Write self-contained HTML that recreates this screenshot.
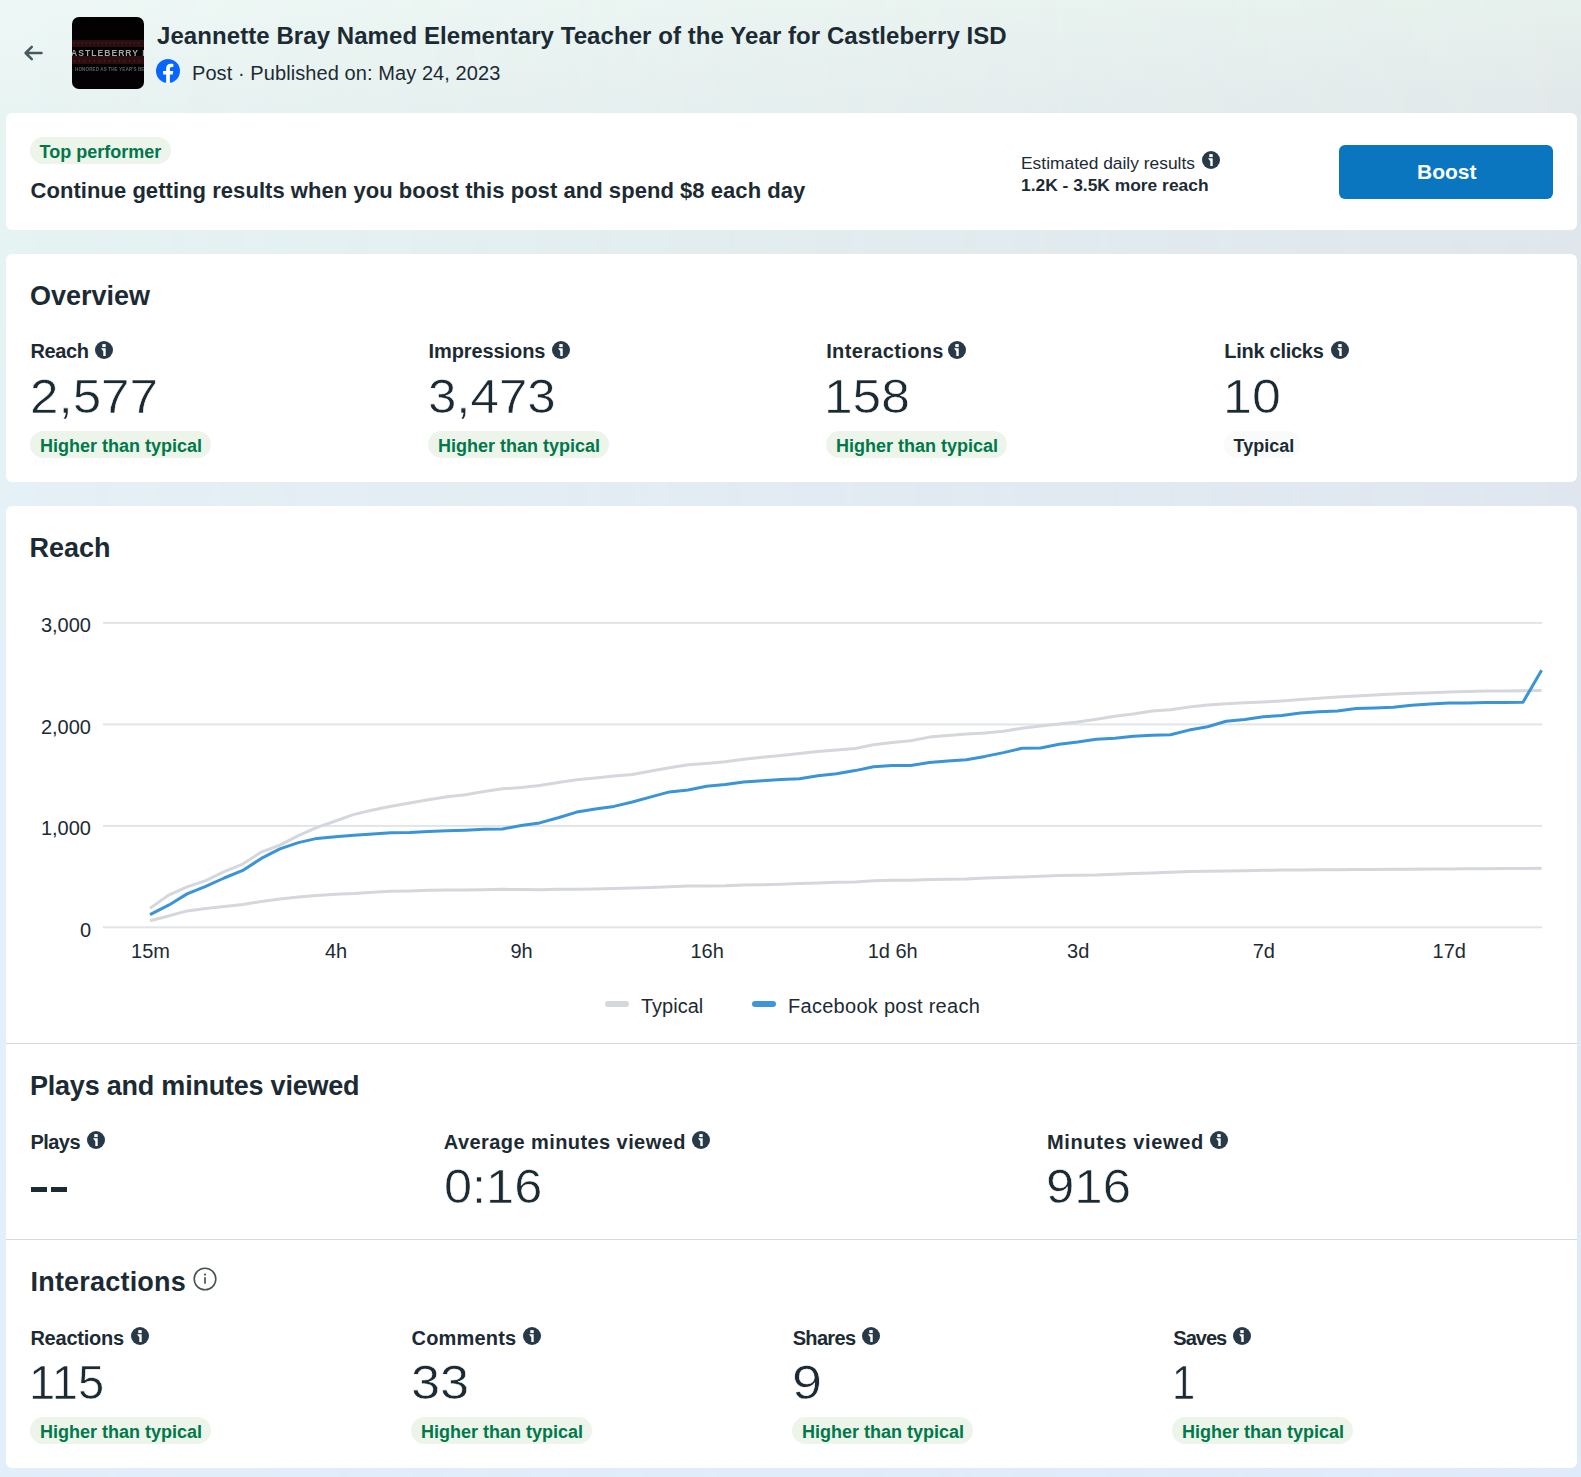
<!DOCTYPE html>
<html><head><meta charset="utf-8"><title>Post insights</title>
<style>
html,body{margin:0;padding:0}
body{width:1581px;height:1477px;position:relative;overflow:hidden;font-family:"Liberation Sans",sans-serif;
background:linear-gradient(180deg,#eef8f6 0px,#e8f4f2 120px,#e6f3f3 240px,#e5f1f6 495px,#e3f0fa 900px,#e2eefa 1477px);}
#bgr{position:absolute;left:0;top:0;width:1581px;height:1477px;
background:linear-gradient(180deg,#e6f0ec 0px,#e2e9ea 100px,#dfe6ec 240px,#dfe6ef 495px,#dfe9f8 900px,#dfeafa 1477px);
-webkit-mask-image:linear-gradient(90deg,transparent 0%,#000 100%);mask-image:linear-gradient(90deg,transparent 0%,#000 100%);}
.a{position:absolute}
.t{position:absolute;white-space:nowrap}
.card{position:absolute;background:#fff;border-radius:6px}
</style></head><body>
<div id="bgr"></div>
<svg class="a" style="left:22px;top:43px" width="22" height="20" viewBox="0 0 22 20"><path d="M19.5 10H3.8M9.8 3.8L3.6 10L9.8 16.2" stroke="#4a575f" stroke-width="2.5" fill="none" stroke-linecap="round" stroke-linejoin="round"/></svg>
<div class="a" style="left:72px;top:17px;width:72px;height:72px;border-radius:7px;background:#030101;overflow:hidden"><div class="a" style="left:0;top:22.5px;width:72px;height:7.5px;background:#2c0e11"></div><div class="a" style="left:0;top:39px;width:72px;height:8px;background:#2c0e11"></div><div class="a" style="left:2px;top:25px;width:68px;height:1.5px;background:repeating-linear-gradient(90deg,#6a4548 0 1px,transparent 1px 4px);opacity:.35"></div><div class="a" style="left:2px;top:43px;width:68px;height:1.5px;background:repeating-linear-gradient(90deg,#6a4548 0 1px,transparent 1px 5px);opacity:.35"></div><div class="t" style="left:-1px;top:31px;font-size:9.5px;line-height:9px;font-weight:700;color:#a3a7a8;letter-spacing:1.15px;transform:scaleX(0.9);transform-origin:0 0;filter:blur(0.45px)">ASTLEBERRY IS</div><div class="t" style="left:3px;top:48.5px;font-size:5px;line-height:6px;font-weight:700;color:#56646a;letter-spacing:0.1px;transform:scaleX(0.92);transform-origin:0 0;filter:blur(0.4px)">HONORED AS THE YEAR'S BEST</div></div>
<div class="t" style="left:157px;top:21.80px;font-size:24px;line-height:27px;font-weight:700;color:#1c2b33;letter-spacing:0.07px">Jeannette Bray Named Elementary Teacher of the Year for Castleberry ISD</div>
<svg class="a" style="left:156px;top:59px" width="24" height="24" viewBox="0 0 1024 1024"><circle cx="512" cy="512" r="512" fill="#0866ff"/><path d="M432 1020V660H302V512H432V399.2C432 270.88 508.44 200 625.39 200C681.41 200 740 210 740 210V336H675.44C611.84 336 592 375.47 592 415.96V512H734L711.3 660H592V1020Z" fill="#fff"/></svg>
<div class="t" style="left:192px;top:61.80px;font-size:20px;line-height:22px;font-weight:400;color:#1c2b33;letter-spacing:0.08px">Post · Published on: May 24, 2023</div>
<div class="card" style="left:6px;top:113px;width:1571px;height:117px"></div>
<div class="a" style="left:30px;top:137px;width:141px;height:27px;border-radius:13.5px;background:#edf4ea"></div>
<div class="t" style="left:39.5px;top:142.10px;font-size:18px;line-height:20px;font-weight:700;color:#00784b;">Top performer</div>
<div class="t" style="left:30.5px;top:178.40px;font-size:22px;line-height:25px;font-weight:700;color:#1c2b33;letter-spacing:0.05px">Continue getting results when you boost this post and spend $8 each day</div>
<div class="t" style="left:1021px;top:152.70px;font-size:17.4px;line-height:20px;font-weight:400;color:#1c2b33;">Estimated daily results</div>
<svg class="a" style="left:1202px;top:151px" width="18" height="18" viewBox="0 0 18 18"><circle cx="9" cy="9" r="9" fill="#283a48"/><rect x="7.3" y="3.1" width="3.4" height="3" fill="#fff"/><path d="M6 7.3H10.7V15H8.3V10.2Z" fill="#fff"/></svg>
<div class="t" style="left:1021px;top:174.50px;font-size:17.4px;line-height:20px;font-weight:700;color:#1c2b33;">1.2K - 3.5K more reach</div>
<div class="a" style="left:1339px;top:145px;width:214px;height:54px;border-radius:6px;background:#0a76bf"></div>
<div class="t" style="left:1417px;top:160.00px;font-size:21px;line-height:23px;font-weight:700;color:#fff;">Boost</div>
<div class="card" style="left:6px;top:254px;width:1571px;height:228px"></div>
<div class="t" style="left:30px;top:280.80px;font-size:27px;line-height:30px;font-weight:700;color:#1c2b33;">Overview</div>
<div class="t" style="left:30.4px;top:340.40px;font-size:20px;line-height:22px;font-weight:700;color:#1c2b33;letter-spacing:-0.353px">Reach</div>
<svg class="a" style="left:95px;top:341px" width="18" height="18" viewBox="0 0 18 18"><circle cx="9" cy="9" r="9" fill="#283a48"/><rect x="7.3" y="3.1" width="3.4" height="3" fill="#fff"/><path d="M6 7.3H10.7V15H8.3V10.2Z" fill="#fff"/></svg>
<div class="t" style="left:30.412px;top:369.00px;font-size:49px;line-height:54px;font-weight:400;color:#1c2b33;transform:scaleX(1.044);transform-origin:0 0;-webkit-text-stroke:0.6px #fff">2,577</div>
<div class="a" style="left:30px;top:431px;width:181px;height:27px;border-radius:13.5px;background:#edf4ea"></div>
<div class="t" style="left:40px;top:435.60px;font-size:18px;line-height:20px;font-weight:700;color:#00784b;">Higher than typical</div>
<div class="t" style="left:428.5px;top:340.40px;font-size:20px;line-height:22px;font-weight:700;color:#1c2b33;letter-spacing:-0.090px">Impressions</div>
<svg class="a" style="left:552.3px;top:341px" width="18" height="18" viewBox="0 0 18 18"><circle cx="9" cy="9" r="9" fill="#283a48"/><rect x="7.3" y="3.1" width="3.4" height="3" fill="#fff"/><path d="M6 7.3H10.7V15H8.3V10.2Z" fill="#fff"/></svg>
<div class="t" style="left:428.459px;top:369.00px;font-size:49px;line-height:54px;font-weight:400;color:#1c2b33;transform:scaleX(1.041);transform-origin:0 0;-webkit-text-stroke:0.6px #fff">3,473</div>
<div class="a" style="left:428px;top:431px;width:181px;height:27px;border-radius:13.5px;background:#edf4ea"></div>
<div class="t" style="left:438px;top:435.60px;font-size:18px;line-height:20px;font-weight:700;color:#00784b;">Higher than typical</div>
<div class="t" style="left:826.2px;top:340.40px;font-size:20px;line-height:22px;font-weight:700;color:#1c2b33;letter-spacing:0.351px">Interactions</div>
<svg class="a" style="left:948px;top:341px" width="18" height="18" viewBox="0 0 18 18"><circle cx="9" cy="9" r="9" fill="#283a48"/><rect x="7.3" y="3.1" width="3.4" height="3" fill="#fff"/><path d="M6 7.3H10.7V15H8.3V10.2Z" fill="#fff"/></svg>
<div class="t" style="left:823.85px;top:369.00px;font-size:49px;line-height:54px;font-weight:400;color:#1c2b33;transform:scaleX(1.05);transform-origin:0 0;-webkit-text-stroke:0.6px #fff">158</div>
<div class="a" style="left:826px;top:431px;width:181px;height:27px;border-radius:13.5px;background:#edf4ea"></div>
<div class="t" style="left:836px;top:435.60px;font-size:18px;line-height:20px;font-weight:700;color:#00784b;">Higher than typical</div>
<div class="t" style="left:1224.2px;top:340.40px;font-size:20px;line-height:22px;font-weight:700;color:#1c2b33;letter-spacing:-0.265px">Link clicks</div>
<svg class="a" style="left:1330.5px;top:341px" width="18" height="18" viewBox="0 0 18 18"><circle cx="9" cy="9" r="9" fill="#283a48"/><rect x="7.3" y="3.1" width="3.4" height="3" fill="#fff"/><path d="M6 7.3H10.7V15H8.3V10.2Z" fill="#fff"/></svg>
<div class="t" style="left:1222.52px;top:369.00px;font-size:49px;line-height:54px;font-weight:400;color:#1c2b33;transform:scaleX(1.06);transform-origin:0 0;-webkit-text-stroke:0.6px #fff">10</div>
<div class="a" style="left:1224px;top:431px;width:77px;height:27px;border-radius:13.5px;background:#f9fbfb"></div>
<div class="t" style="left:1233.5px;top:435.60px;font-size:18px;line-height:20px;font-weight:700;color:#1c2b33;">Typical</div>
<div class="card" style="left:6px;top:506px;width:1571px;height:962px"></div>
<div class="t" style="left:29.5px;top:533.00px;font-size:27px;line-height:30px;font-weight:700;color:#1c2b33;">Reach</div>
<svg class="a" style="left:0;top:0" width="1581" height="1100" viewBox="0 0 1581 1100"><rect x="103" y="621.9" width="1439" height="2" fill="#e2e4e7"/><rect x="103" y="723.4" width="1439" height="2" fill="#e2e4e7"/><rect x="103" y="824.9" width="1439" height="2" fill="#e2e4e7"/><rect x="103" y="926.3" width="1439" height="2" fill="#e2e4e7"/><path d="M150.0 920.7 L168.6 916.0 L187.1 910.9 L205.7 908.4 L224.2 906.5 L242.8 904.6 L261.3 901.4 L279.9 898.9 L298.4 897.0 L317.0 895.4 L335.5 894.3 L354.1 893.5 L372.7 892.2 L391.2 891.3 L409.8 890.9 L428.3 890.3 L446.9 890.0 L465.4 890.0 L484.0 889.7 L502.5 889.3 L521.1 889.6 L539.6 889.7 L558.2 889.3 L576.8 889.3 L595.3 888.9 L613.9 888.6 L632.4 888.0 L651.0 887.4 L669.5 886.7 L688.1 886.1 L706.6 885.9 L725.2 885.7 L743.7 885.0 L762.3 884.7 L780.9 884.2 L799.4 883.4 L818.0 882.9 L836.5 882.3 L855.1 881.9 L873.6 880.7 L892.2 880.2 L910.7 880.3 L929.3 879.6 L947.9 879.3 L966.4 878.9 L985.0 878.0 L1003.5 877.5 L1022.1 876.9 L1040.6 876.2 L1059.2 875.5 L1077.7 875.2 L1096.3 875.0 L1114.8 874.3 L1133.4 873.6 L1152.0 873.0 L1170.5 872.3 L1189.1 871.6 L1207.6 871.3 L1226.2 870.9 L1244.7 870.7 L1263.3 870.2 L1281.8 870.1 L1300.4 869.9 L1318.9 869.8 L1337.5 869.7 L1356.1 869.6 L1374.6 869.4 L1393.2 869.3 L1411.7 869.2 L1430.3 869.1 L1448.8 868.9 L1467.4 868.8 L1485.9 868.7 L1504.5 868.6 L1523.0 868.4 L1541.6 868.3" fill="none" stroke="#d4d7db" stroke-width="3" stroke-linejoin="round" stroke-linecap="butt"/><path d="M150.0 908.4 L168.6 895.1 L187.1 886.9 L205.7 880.6 L224.2 871.7 L242.8 864.1 L261.3 852.1 L279.9 845.1 L298.4 835.7 L317.0 827.4 L335.5 821.0 L354.1 814.4 L372.7 810.0 L391.2 806.2 L409.8 803.0 L428.3 799.8 L446.9 796.7 L465.4 794.8 L484.0 791.6 L502.5 788.8 L521.1 787.5 L539.6 785.5 L558.2 782.4 L576.8 779.8 L595.3 778.0 L613.9 776.1 L632.4 774.4 L651.0 771.0 L669.5 767.8 L688.1 764.7 L706.6 763.4 L725.2 761.7 L743.7 759.2 L762.3 757.3 L780.9 755.4 L799.4 753.5 L818.0 751.6 L836.5 750.0 L855.1 748.5 L873.6 744.7 L892.2 742.5 L910.7 740.8 L929.3 737.1 L947.9 735.4 L966.4 734.0 L985.0 733.1 L1003.5 731.3 L1022.1 728.2 L1040.6 725.9 L1059.2 723.9 L1077.7 722.0 L1096.3 719.3 L1114.8 716.3 L1133.4 713.9 L1152.0 711.1 L1170.5 709.8 L1189.1 707.1 L1207.6 705.1 L1226.2 703.7 L1244.7 702.7 L1263.3 702.0 L1281.8 700.9 L1300.4 699.5 L1318.9 698.2 L1337.5 697.1 L1356.1 696.0 L1374.6 695.0 L1393.2 694.1 L1411.7 693.3 L1430.3 692.7 L1448.8 692.0 L1467.4 691.4 L1485.9 691.1 L1504.5 690.9 L1523.0 690.8 L1541.6 690.6" fill="none" stroke="#d4d7db" stroke-width="3" stroke-linejoin="round" stroke-linecap="butt"/><path d="M150.0 914.7 L168.6 905.2 L187.1 893.9 L205.7 886.3 L224.2 878.0 L242.8 870.4 L261.3 858.4 L279.9 848.9 L298.4 842.6 L317.0 838.4 L335.5 836.8 L354.1 835.3 L372.7 834.0 L391.2 832.7 L409.8 832.4 L428.3 831.5 L446.9 830.8 L465.4 830.2 L484.0 829.3 L502.5 828.9 L521.1 825.6 L539.6 822.9 L558.2 817.8 L576.8 812.1 L595.3 809.0 L613.9 806.4 L632.4 802.0 L651.0 796.9 L669.5 791.9 L688.1 790.0 L706.6 786.2 L725.2 784.5 L743.7 782.0 L762.3 780.7 L780.9 779.5 L799.4 778.8 L818.0 775.7 L836.5 773.8 L855.1 770.6 L873.6 766.8 L892.2 765.5 L910.7 765.6 L929.3 762.4 L947.9 761.1 L966.4 759.7 L985.0 756.4 L1003.5 752.6 L1022.1 748.2 L1040.6 748.0 L1059.2 744.2 L1077.7 742.0 L1096.3 739.3 L1114.8 738.2 L1133.4 736.2 L1152.0 735.2 L1170.5 734.8 L1189.1 730.1 L1207.6 726.7 L1226.2 721.3 L1244.7 719.5 L1263.3 716.8 L1281.8 715.4 L1300.4 713.1 L1318.9 711.7 L1337.5 710.9 L1356.1 708.6 L1374.6 707.9 L1393.2 707.2 L1411.7 705.2 L1430.3 703.9 L1448.8 703.0 L1467.4 702.9 L1485.9 702.6 L1504.5 702.4 L1523.0 702.2 L1541.6 670.2" fill="none" stroke="#3b94d6" stroke-width="3" stroke-linejoin="round" stroke-linecap="butt"/></svg>
<div class="t" style="left:0;width:91px;text-align:right;top:613.9px;font-size:20px;line-height:22px;color:#1c2b33">3,000</div>
<div class="t" style="left:0;width:91px;text-align:right;top:715.5px;font-size:20px;line-height:22px;color:#1c2b33">2,000</div>
<div class="t" style="left:0;width:91px;text-align:right;top:817.0px;font-size:20px;line-height:22px;color:#1c2b33">1,000</div>
<div class="t" style="left:0;width:91px;text-align:right;top:918.9px;font-size:20px;line-height:22px;color:#1c2b33">0</div>
<div class="t" style="left:90.5px;width:120px;text-align:center;top:940.2px;font-size:20px;line-height:22px;color:#1c2b33">15m</div>
<div class="t" style="left:276.0px;width:120px;text-align:center;top:940.2px;font-size:20px;line-height:22px;color:#1c2b33">4h</div>
<div class="t" style="left:461.6px;width:120px;text-align:center;top:940.2px;font-size:20px;line-height:22px;color:#1c2b33">9h</div>
<div class="t" style="left:647.1px;width:120px;text-align:center;top:940.2px;font-size:20px;line-height:22px;color:#1c2b33">16h</div>
<div class="t" style="left:832.7px;width:120px;text-align:center;top:940.2px;font-size:20px;line-height:22px;color:#1c2b33">1d 6h</div>
<div class="t" style="left:1018.2px;width:120px;text-align:center;top:940.2px;font-size:20px;line-height:22px;color:#1c2b33">3d</div>
<div class="t" style="left:1203.8px;width:120px;text-align:center;top:940.2px;font-size:20px;line-height:22px;color:#1c2b33">7d</div>
<div class="t" style="left:1389.3px;width:120px;text-align:center;top:940.2px;font-size:20px;line-height:22px;color:#1c2b33">17d</div>
<div class="a" style="left:605px;top:1001px;width:24px;height:6px;border-radius:3px;background:#d4d7db"></div>
<div class="t" style="left:641px;top:994.80px;font-size:20px;line-height:22px;font-weight:400;color:#1c2b33;">Typical</div>
<div class="a" style="left:752px;top:1001px;width:24px;height:6px;border-radius:3px;background:#3f95d8"></div>
<div class="t" style="left:788px;top:994.80px;font-size:20px;line-height:22px;font-weight:400;color:#1c2b33;letter-spacing:0.28px">Facebook post reach</div>
<div class="a" style="left:6px;top:1043px;width:1571px;height:1px;background:#d3dae0"></div>
<div class="t" style="left:30px;top:1071.30px;font-size:27px;line-height:30px;font-weight:700;color:#1c2b33;letter-spacing:-0.22px">Plays and minutes viewed</div>
<div class="t" style="left:30.4px;top:1130.80px;font-size:20px;line-height:22px;font-weight:700;color:#1c2b33;letter-spacing:-0.535px">Plays</div>
<svg class="a" style="left:87.2px;top:1131px" width="18" height="18" viewBox="0 0 18 18"><circle cx="9" cy="9" r="9" fill="#283a48"/><rect x="7.3" y="3.1" width="3.4" height="3" fill="#fff"/><path d="M6 7.3H10.7V15H8.3V10.2Z" fill="#fff"/></svg>
<div class="t" style="left:443.8px;top:1130.80px;font-size:20px;line-height:22px;font-weight:700;color:#1c2b33;letter-spacing:0.425px">Average minutes viewed</div>
<svg class="a" style="left:691.8px;top:1131px" width="18" height="18" viewBox="0 0 18 18"><circle cx="9" cy="9" r="9" fill="#283a48"/><rect x="7.3" y="3.1" width="3.4" height="3" fill="#fff"/><path d="M6 7.3H10.7V15H8.3V10.2Z" fill="#fff"/></svg>
<div class="t" style="left:1047px;top:1130.80px;font-size:20px;line-height:22px;font-weight:700;color:#1c2b33;letter-spacing:0.646px">Minutes viewed</div>
<svg class="a" style="left:1209.6px;top:1131px" width="18" height="18" viewBox="0 0 18 18"><circle cx="9" cy="9" r="9" fill="#283a48"/><rect x="7.3" y="3.1" width="3.4" height="3" fill="#fff"/><path d="M6 7.3H10.7V15H8.3V10.2Z" fill="#fff"/></svg>
<div class="t" style="left:444.27000000000004px;top:1159.00px;font-size:49px;line-height:54px;font-weight:400;color:#1c2b33;transform:scaleX(1.03);transform-origin:0 0;-webkit-text-stroke:0.6px #fff">0:16</div>
<div class="t" style="left:1046.422px;top:1159.00px;font-size:49px;line-height:54px;font-weight:400;color:#1c2b33;transform:scaleX(1.039);transform-origin:0 0;-webkit-text-stroke:0.6px #fff">916</div>
<div class="a" style="left:31.4px;top:1186.6px;width:16px;height:5.4px;background:#1c2b33"></div>
<div class="a" style="left:50.8px;top:1186.6px;width:16.4px;height:5.4px;background:#1c2b33"></div>
<div class="a" style="left:6px;top:1239px;width:1571px;height:1px;background:#d3dae0"></div>
<div class="t" style="left:30.5px;top:1266.90px;font-size:27px;line-height:30px;font-weight:700;color:#1c2b33;letter-spacing:0.2px">Interactions</div>
<svg class="a" style="left:193px;top:1267px" width="24" height="24" viewBox="0 0 24 24"><circle cx="12" cy="12" r="10.8" fill="none" stroke="#46535b" stroke-width="1.6"/><circle cx="12" cy="7.6" r="1.1" fill="#46535b"/><rect x="11.15" y="10.2" width="1.7" height="6.5" fill="#46535b"/></svg>
<div class="t" style="left:30.4px;top:1327.00px;font-size:20px;line-height:22px;font-weight:700;color:#1c2b33;letter-spacing:-0.220px">Reactions</div>
<svg class="a" style="left:131px;top:1327px" width="18" height="18" viewBox="0 0 18 18"><circle cx="9" cy="9" r="9" fill="#283a48"/><rect x="7.3" y="3.1" width="3.4" height="3" fill="#fff"/><path d="M6 7.3H10.7V15H8.3V10.2Z" fill="#fff"/></svg>
<div class="t" style="left:29.317000000000004px;top:1355.00px;font-size:49px;line-height:54px;font-weight:400;color:#1c2b33;transform:scaleX(0.961);transform-origin:0 0;-webkit-text-stroke:0.6px #fff">115</div>
<div class="a" style="left:30px;top:1417px;width:181px;height:27px;border-radius:13.5px;background:#edf4ea"></div>
<div class="t" style="left:40px;top:1421.60px;font-size:18px;line-height:20px;font-weight:700;color:#00784b;">Higher than typical</div>
<div class="t" style="left:411.6px;top:1327.00px;font-size:20px;line-height:22px;font-weight:700;color:#1c2b33;letter-spacing:0.181px">Comments</div>
<svg class="a" style="left:523px;top:1327px" width="18" height="18" viewBox="0 0 18 18"><circle cx="9" cy="9" r="9" fill="#283a48"/><rect x="7.3" y="3.1" width="3.4" height="3" fill="#fff"/><path d="M6 7.3H10.7V15H8.3V10.2Z" fill="#fff"/></svg>
<div class="t" style="left:411.236px;top:1355.00px;font-size:49px;line-height:54px;font-weight:400;color:#1c2b33;transform:scaleX(1.064);transform-origin:0 0;-webkit-text-stroke:0.6px #fff">33</div>
<div class="a" style="left:411px;top:1417px;width:181px;height:27px;border-radius:13.5px;background:#edf4ea"></div>
<div class="t" style="left:421px;top:1421.60px;font-size:18px;line-height:20px;font-weight:700;color:#00784b;">Higher than typical</div>
<div class="t" style="left:792.7px;top:1327.00px;font-size:20px;line-height:22px;font-weight:700;color:#1c2b33;letter-spacing:-0.678px">Shares</div>
<svg class="a" style="left:862px;top:1327px" width="18" height="18" viewBox="0 0 18 18"><circle cx="9" cy="9" r="9" fill="#283a48"/><rect x="7.3" y="3.1" width="3.4" height="3" fill="#fff"/><path d="M6 7.3H10.7V15H8.3V10.2Z" fill="#fff"/></svg>
<div class="t" style="left:792.0px;top:1355.00px;font-size:49px;line-height:54px;font-weight:400;color:#1c2b33;transform:scaleX(1.1);transform-origin:0 0;-webkit-text-stroke:0.6px #fff">9</div>
<div class="a" style="left:792px;top:1417px;width:181px;height:27px;border-radius:13.5px;background:#edf4ea"></div>
<div class="t" style="left:802px;top:1421.60px;font-size:18px;line-height:20px;font-weight:700;color:#00784b;">Higher than typical</div>
<div class="t" style="left:1173.3px;top:1327.00px;font-size:20px;line-height:22px;font-weight:700;color:#1c2b33;letter-spacing:-1.002px">Saves</div>
<svg class="a" style="left:1233px;top:1327px" width="18" height="18" viewBox="0 0 18 18"><circle cx="9" cy="9" r="9" fill="#283a48"/><rect x="7.3" y="3.1" width="3.4" height="3" fill="#fff"/><path d="M6 7.3H10.7V15H8.3V10.2Z" fill="#fff"/></svg>
<div class="t" style="left:1171.95px;top:1355.00px;font-size:49px;line-height:54px;font-weight:400;color:#1c2b33;transform:scaleX(0.85);transform-origin:0 0;-webkit-text-stroke:0.6px #fff">1</div>
<div class="a" style="left:1172px;top:1417px;width:181px;height:27px;border-radius:13.5px;background:#edf4ea"></div>
<div class="t" style="left:1182px;top:1421.60px;font-size:18px;line-height:20px;font-weight:700;color:#00784b;">Higher than typical</div>
</body></html>
